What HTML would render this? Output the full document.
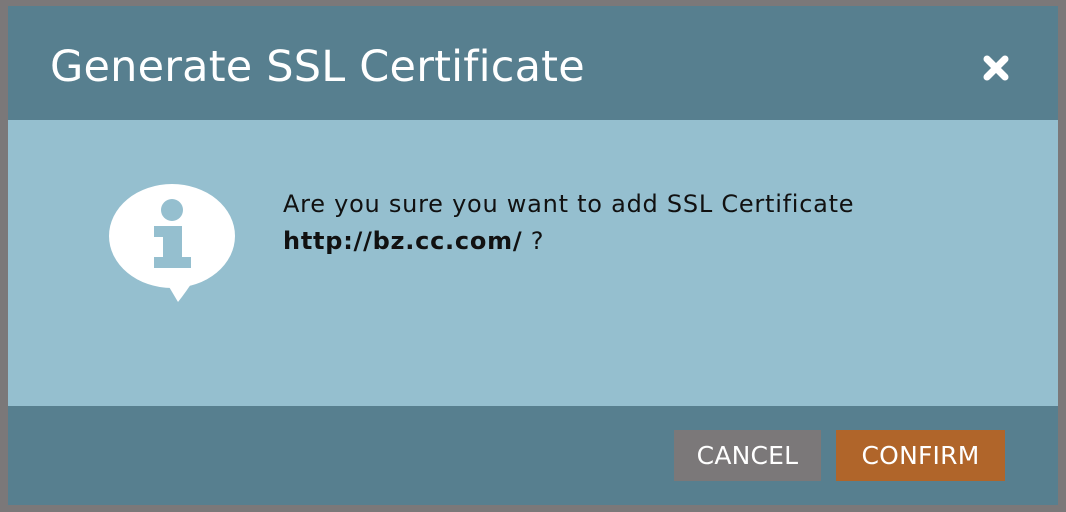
<!DOCTYPE html>
<html><head><meta charset="utf-8"><style>
*{margin:0;padding:0;box-sizing:border-box}
body{width:1066px;height:512px;background:#7b7879;position:relative;overflow:hidden;font-family:"DejaVu Sans","Liberation Sans",sans-serif}
.hd{position:absolute;left:8px;top:6px;width:1050px;height:114px;background:#577f8f}
.hd h1{position:absolute;left:42px;top:33px;font-weight:normal;color:#fff;font-size:43px;letter-spacing:0.2px;line-height:56px}
.bd{position:absolute;left:8px;top:120px;width:1050px;height:286px;background:#95bfcf}
.ft{position:absolute;left:8px;top:406px;width:1050px;height:99px;background:#577f8f}
.msg{position:absolute;left:283px;top:186px;font-size:24px;line-height:37px;color:#111;letter-spacing:0.75px}
.btn{position:absolute;top:430px;height:51px;color:#fff;font-size:25px;line-height:51px;text-align:center;letter-spacing:0.2px}
</style></head><body>
<div class="hd"><h1>Generate SSL Certificate</h1>
<svg style="position:absolute;left:974px;top:48px" width="28" height="28" viewBox="0 0 28 28"><path d="M5 5L23 23M23 5L5 23" stroke="#fff" stroke-width="7" stroke-linecap="round"/></svg>
</div>
<div class="bd"></div>
<svg style="position:absolute;left:105px;top:175px" width="135" height="130" viewBox="105 175 135 130">
<ellipse cx="172" cy="236" rx="63" ry="52" fill="#fff"/>
<path d="M165 280 L178 302 Q186 292 195 278 Z" fill="#fff"/>
<circle cx="172" cy="210" r="11" fill="#95bfcf"/>
<path d="M154 226 H182 V257 H191 V268 H154 V257 H163 V237 H154 Z" fill="#95bfcf"/>
</svg>
<div class="msg">Are you sure you want to add SSL Certificate<br><b>http://bz.cc.com/</b> ?</div>
<div class="ft"></div>
<div class="btn" style="left:674px;width:147px;background:#7b7879">CANCEL</div>
<div class="btn" style="left:836px;width:169px;background:#b0652a">CONFIRM</div>
</body></html>
